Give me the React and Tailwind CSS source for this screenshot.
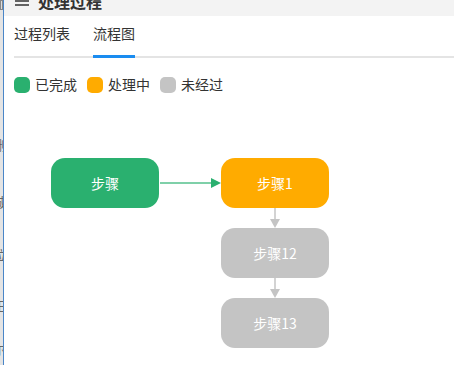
import React from 'react';

const FONT = { fontFamily: '"Microsoft YaHei", "Noto Sans CJK SC", "Noto Sans", sans-serif' };

const LEGEND = [
  { label: '已完成', color: 'bg-[#2ab06f]' },
  { label: '处理中', color: 'bg-[#ffab00]' },
  { label: '未经过', color: 'bg-[#c4c4c4]' },
];

// diagram nodes: place on the canvas is the content
const NODES = [
  { label: '步骤', x: 47, y: 63, color: 'bg-[#2ab06f]' },
  { label: '步骤1', x: 217, y: 63, color: 'bg-[#ffab00]' },
  { label: '步骤12', x: 217, y: 133, color: 'bg-[#c4c4c4]' },
  { label: '步骤13', x: 217, y: 203, color: 'bg-[#c4c4c4]' },
];

const App = () => {
  return (
    <div className="flex h-[365px] w-[454px] overflow-hidden bg-white" style={FONT}>
      {/* left edge of the sidebar behind */}
      <div className="flex w-[4px] shrink-0 flex-col overflow-hidden border-r border-[#4a86c8] bg-[#e4e4e4] text-[13px] leading-none text-[#666]">
        <div className="h-[10px] border border-[#888] bg-[#ddd]" />
        <div className="mt-[128px] -ml-[7px]">删</div>
        <div className="mt-[44px] -ml-[7px]">城</div>
        <div className="mt-[40px] -ml-[7px]">拉</div>
        <div className="mt-[38px] -ml-[7px]">田</div>
        <div className="mt-[30px] -ml-[7px]">尔</div>
      </div>

      <div className="flex min-w-0 flex-1 flex-col">
        {/* header, mostly scrolled out */}
        <div className="h-[16px] shrink-0 overflow-hidden bg-[#f3f3f3]">
          <div className="-mt-[9px] flex h-[20px] items-center gap-[9px] pl-[11px] text-[16px] font-bold text-[#333]">
            <svg width="14" height="10" viewBox="0 0 14 10" className="shrink-0">
              <path d="M0 1h14M0 5h14M0 9h14" stroke="#333" strokeWidth="1.5" />
            </svg>
            <span>处理过程</span>
          </div>
        </div>

        {/* tabs */}
        <div className="ml-[10px] flex h-[42px] items-stretch gap-[23px] border-b-2 border-[#e4e4e4] text-[14px] text-[#333]">
          <div className="flex items-center pb-[6px]">过程列表</div>
          <div className="-mb-[2px] flex items-center border-b-[3px] border-[#1a8cf0] pb-[4px]">流程图</div>
        </div>

        {/* legend */}
        <div className="ml-[10px] mt-[16px] flex items-center text-[14px] text-[#333]">
          {LEGEND.map((l) => (
            <div key={l.label} className="mr-[10px] flex items-center gap-[5px]">
              <span className={`h-[16px] w-[16px] rounded-[5px] ${l.color}`} />
              <span>{l.label}</span>
            </div>
          ))}
        </div>

        {/* flow chart canvas */}
        <div className="relative flex-1">
          {NODES.map((n) => (
            <div
              key={n.label}
              className={`absolute flex h-[50px] w-[108px] items-center justify-center rounded-[14px] text-[14px] text-white ${n.color}`}
              style={{ left: n.x, top: n.y }}
            >
              {n.label}
            </div>
          ))}
          <svg className="absolute left-0 top-0" width="450" height="270">
            <line x1="156" y1="88" x2="210" y2="88" stroke="#55c08d" strokeWidth="1.5" />
            <path d="M207 83 L217 88 L207 93 Z" fill="#2ab06f" />
            <line x1="271" y1="113" x2="271" y2="127" stroke="#c4c4c4" strokeWidth="1.5" />
            <path d="M266 124 L271 133 L276 124 Z" fill="#c4c4c4" />
            <line x1="271" y1="183" x2="271" y2="197" stroke="#c4c4c4" strokeWidth="1.5" />
            <path d="M266 194 L271 203 L276 194 Z" fill="#c4c4c4" />
          </svg>
        </div>
      </div>
    </div>
  );
};

export default App;
